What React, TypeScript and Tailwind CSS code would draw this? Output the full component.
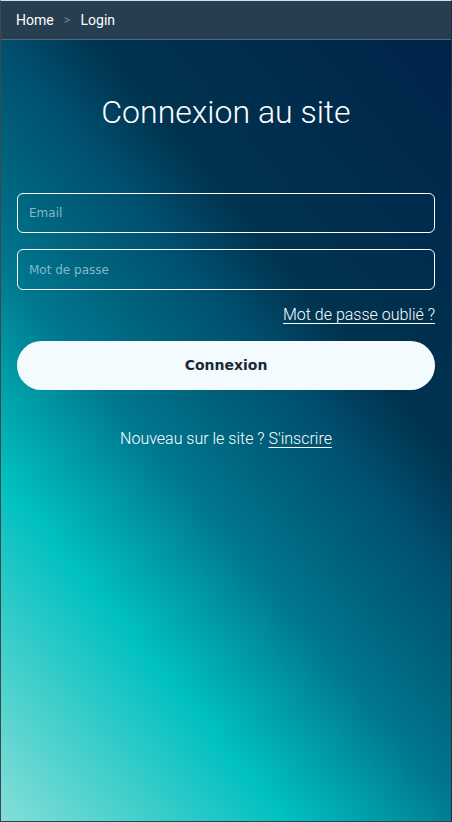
export default function App() {
  return (
    <div
      className="w-[452px] h-[822px] flex flex-col overflow-hidden border-t border-t-[#d8dde0] border-l border-l-[#3c4850] border-r border-r-[#1e3040] border-b border-b-[#1f4a55]"
      style={{ fontFamily: "Roboto, 'Liberation Sans', sans-serif" }}
    >
      {/* Breadcrumb */}
      <nav className="h-[39px] shrink-0 bg-[#263e50] border-b border-[#4e6a7e] flex items-center px-[15px] text-[14px] text-white">
        <span>Home</span>
        <span className="mx-[10px] text-[#6d8090] text-[13px]">&gt;</span>
        <span>Login</span>
      </nav>

      {/* Login */}
      <main className="flex-1 bg-[linear-gradient(50deg,#85ded7_0%,#00c0c0_26%,#0090a0_37%,#007890_42%,#00647e_50%,#005070_59%,#00334f_68%,#00244a_100%)] px-[16px] flex flex-col">
        <h1 className="mt-[52px] text-center text-white text-[32px] font-light leading-[40px]">Connexion au site</h1>

        <div className="mt-[61px] flex flex-col gap-[16px]">
          <div className="h-[40px] rounded-[6px] border border-white flex items-center px-[11px] text-[12px] text-[#86b8c8]" style={{ fontFamily: "'DejaVu Sans', Verdana, sans-serif" }}>
            Email
          </div>
          <div className="h-[41px] rounded-[6px] border border-white flex items-center px-[11px] text-[12px] text-[#86b8c8]" style={{ fontFamily: "'DejaVu Sans', Verdana, sans-serif" }}>
            Mot de passe
          </div>
        </div>

        <div className="mt-[14px] flex justify-end">
          <a className="text-white text-[16px] font-light underline underline-offset-[3px] leading-[22px]">Mot de passe oublié ?</a>
        </div>

        <button className="mt-[15px] h-[49px] w-full rounded-full bg-[#f3fbff] text-[#1b2735] text-[14px] font-bold" style={{ fontFamily: "'DejaVu Sans', Verdana, sans-serif" }}>
          Connexion
        </button>

        <p className="mt-[38px] text-center text-white text-[16px] font-light leading-[22px]">
          Nouveau sur le site ? <a className="underline underline-offset-[3px]">S'inscrire</a>
        </p>
      </main>
    </div>
  );
}
